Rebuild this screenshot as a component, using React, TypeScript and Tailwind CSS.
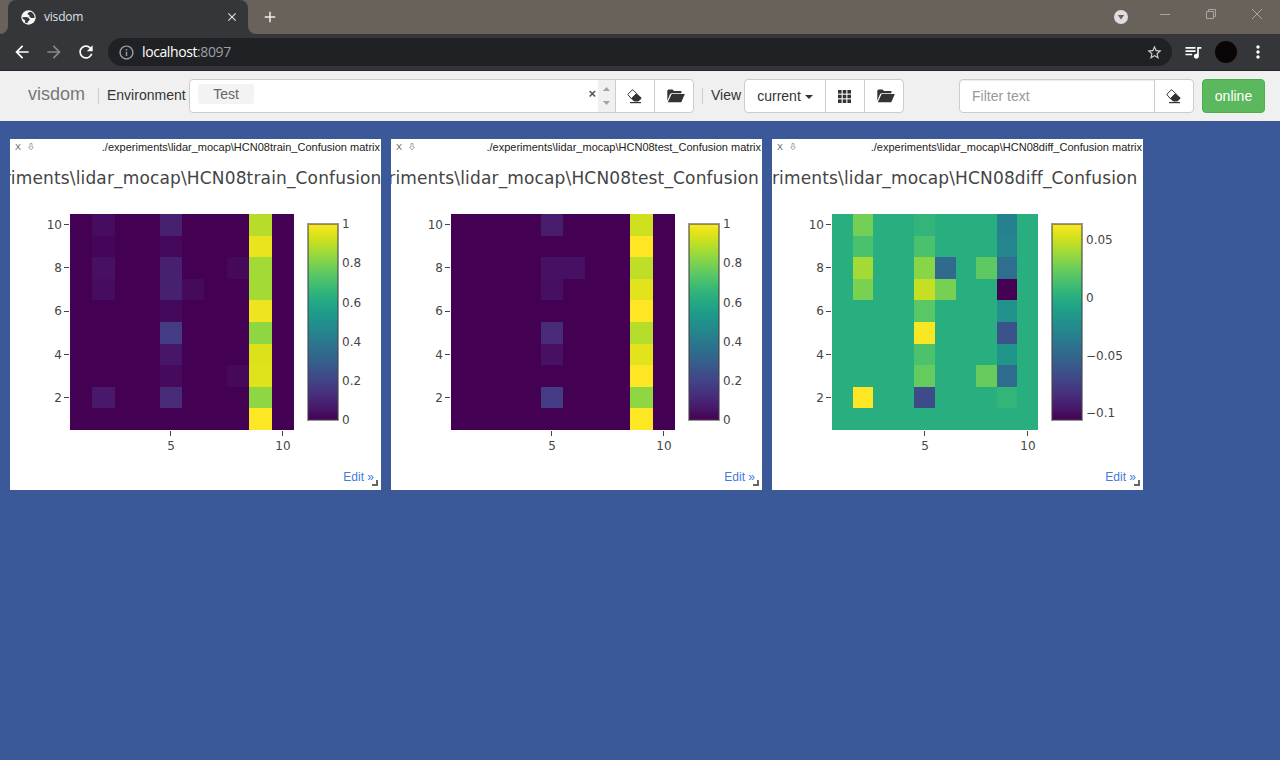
import React, { useId } from 'react';
import {
  MdArrowBack,
  MdArrowForward,
  MdClose,
  MdMoreVert,
  MdOutlineInfo,
  MdQueueMusic,
  MdRefresh,
  MdStarBorder,
  MdAdd,
} from 'react-icons/md';

const VIRIDIS: [number, number, number][] = [
  [68, 1, 84], [72, 24, 106], [71, 45, 123], [66, 64, 134], [59, 82, 139], [51, 99, 141],
  [44, 114, 142], [38, 130, 142], [33, 145, 140], [31, 160, 136], [40, 174, 128], [63, 188, 115],
  [94, 201, 98], [132, 212, 75], [173, 220, 48], [216, 226, 25], [253, 231, 37],
];

function viridis(t: number) {
  const p = Math.min(Math.max(t, 0), 1) * 16;
  const i = Math.min(Math.floor(p), 15);
  const c = VIRIDIS[i].map((v, k) => Math.round(v + (VIRIDIS[i + 1][k] - v) * (p - i)));
  return `rgb(${c[0]},${c[1]},${c[2]})`;
}

// A cell is [row, column, value], with the value scaled to 0..1
type Cell = [number, number, number];
type Tick = [number, string];

interface Pane {
  name: string;
  titleX: number;
  plotW: number;
  base: number;
  barX: number;
  xTicks: Tick[];
  barTicks: Tick[];
  cells: Cell[];
}

const UNIT_TICKS: Tick[] = [[85, '1'], [124, '0.8'], [164, '0.6'], [203, '0.4'], [242, '0.2'], [281, '0']];

const PANES: Pane[] = [
  {
    name: 'train', titleX: 371.5, plotW: 224, base: 0, barX: 298, xTicks: [[160, '5'], [272, '10']], barTicks: UNIT_TICKS,
    cells: [
      [10, 2, 0.03], [10, 5, 0.085], [10, 9, 0.89], [9, 2, 0.014], [9, 5, 0.018], [9, 9, 0.966],
      [8, 2, 0.042], [8, 5, 0.085], [8, 8, 0.018], [8, 9, 0.86], [7, 2, 0.03], [7, 5, 0.085],
      [7, 6, 0.024], [7, 9, 0.86], [6, 5, 0.022], [6, 9, 0.975], [5, 5, 0.172], [5, 9, 0.83],
      [4, 5, 0.058], [4, 9, 0.942], [3, 5, 0.024], [3, 8, 0.018], [3, 9, 0.95], [2, 2, 0.066],
      [2, 5, 0.115], [2, 9, 0.83], [1, 9, 1],
    ],
  },
  {
    name: 'test', titleX: 368, plotW: 224, base: 0, barX: 298, xTicks: [[160, '5'], [272, '10']], barTicks: UNIT_TICKS,
    cells: [
      [10, 5, 0.075], [10, 9, 0.925], [9, 9, 1], [8, 5, 0.044], [8, 6, 0.044], [8, 9, 0.9],
      [7, 5, 0.038], [7, 9, 0.955], [6, 9, 1], [5, 5, 0.115], [5, 9, 0.885], [4, 5, 0.04],
      [4, 9, 0.955], [3, 9, 1], [2, 5, 0.17], [2, 9, 0.83], [1, 9, 1],
    ],
  },
  {
    name: 'diff', titleX: 365.5, plotW: 206, base: 0.627, barX: 280, xTicks: [[152, '5'], [255, '10']],
    barTicks: [[101, '0.05'], [159, '0'], [217, '−0.05'], [274, '−0.1']],
    cells: [
      [10, 2, 0.785], [10, 5, 0.655], [10, 9, 0.435], [9, 2, 0.71], [9, 5, 0.71], [9, 9, 0.45],
      [8, 2, 0.86], [8, 5, 0.82], [8, 6, 0.34], [8, 8, 0.75], [8, 9, 0.36], [7, 2, 0.795],
      [7, 5, 0.91], [7, 6, 0.79], [7, 9, 0], [6, 5, 0.74], [6, 9, 0.505], [5, 5, 0.995],
      [5, 9, 0.25], [4, 5, 0.715], [4, 9, 0.52], [3, 5, 0.76], [3, 8, 0.765], [3, 9, 0.35],
      [2, 2, 1], [2, 5, 0.23], [2, 9, 0.655],
    ],
  },
];

const PLOT_X = 60;
const PLOT_Y = 75;
const PLOT_H = 216;

function Heatmap({ pane }: { pane: Pane }) {
  const id = useId();
  const colX = (c: number) => PLOT_X + Math.round((pane.plotW * c) / 10);
  const rowY = (r: number) => PLOT_Y + Math.round((PLOT_H * r) / 10);
  return (
    <svg
      className="absolute inset-0 font-['DejaVu_Sans',sans-serif] text-[12px]"
      width="371"
      height="351"
      fill="#444"
    >
      <defs>
        <linearGradient id={id} x1="0" y1="1" x2="0" y2="0">
          {VIRIDIS.map((_, i) => (
            <stop key={i} offset={i / 16} stopColor={viridis(i / 16)} />
          ))}
        </linearGradient>
      </defs>
      <text x={pane.titleX} y="45" textAnchor="end" fontSize="17" letterSpacing="0.15">
        {`./experiments\\lidar_mocap\\HCN08${pane.name}_Confusion`}
      </text>
      <g shapeRendering="crispEdges">
        <rect x={PLOT_X} y={PLOT_Y} width={pane.plotW} height={PLOT_H} fill={viridis(pane.base)} />
        {pane.cells.map(([r, c, v]) => (
          <rect
            key={`${r}-${c}`}
            x={colX(c - 1)}
            y={rowY(10 - r)}
            width={colX(c) - colX(c - 1)}
            height={rowY(11 - r) - rowY(10 - r)}
            fill={viridis(v)}
          />
        ))}
        {[85, 128, 172, 215, 258].map((y) => (
          <rect key={y} x="54" y={y - 1 + 1} width="5" height="1" />
        ))}
        {pane.xTicks.map(([x]) => (
          <rect key={x} x={x} y="292" width="1" height="5" />
        ))}
      </g>
      {[10, 8, 6, 4, 2].map((n, i) => (
        <text key={n} x="52" y={[90, 133, 176, 220, 263][i]} textAnchor="end">{n}</text>
      ))}
      {pane.xTicks.map(([x, label]) => (
        <text key={label} x={x + 1} y="311" textAnchor="middle">{label}</text>
      ))}
      <rect x={pane.barX} y="85" width="30" height="196" fill={`url(#${id})`} stroke="#444" strokeOpacity="0.55" strokeWidth="2" />
      {pane.barTicks.map(([y, label]) => (
        <text key={label} x={pane.barX + 34} y={y + 4}>{label}</text>
      ))}
    </svg>
  );
}

function PlotPane({ pane }: { pane: Pane }) {
  return (
    <section className="relative flex h-[351px] w-[371px] flex-col justify-between overflow-hidden bg-white">
      <Heatmap pane={pane} />
      <header className="relative flex h-[16px] items-center pr-px text-[11px] leading-[16px] text-[#222]">
        <span className="ml-[5px] w-[12px] text-[9px] leading-[14px] text-[#666]">X</span>
        <svg className="mb-[1px] ml-px" width="6" height="8" viewBox="0 0 6 8" fill="none" stroke="#999" strokeWidth="0.8">
          <path d="M2 .5h2v3.700h1.400L3 7 .6 4.200H2z" />
        </svg>
        <span className="ml-auto whitespace-nowrap">{`./experiments\\lidar_mocap\\HCN08${pane.name}_Confusion matrix`}</span>
      </header>
      <footer className="relative flex h-[26px] justify-end pr-[7px] text-[12px] leading-[26px] text-[#447bdc]">
        <span>Edit »</span>
        <svg className="absolute bottom-[4px] right-[3px]" width="6" height="6">
          <path d="M4 0h2v6H0V4h4z" fill="#666" />
        </svg>
      </footer>
    </section>
  );
}

function Eraser() {
  return (
    <svg className="-ml-[1px]" width="15" height="15" viewBox="0 0 15 15">
      <path d="M5 1.100 1.200 5q-.4.5 0 1l3.300 3.800L9.700 4.600 6.200 1.100q-.6-.5-1.200 0z" fill="none" stroke="#333" strokeWidth="1" />
      <path d="M9.500 4.200l4.700 4.400q.6.600 0 1.200L11.900 12q-.4.400-1 .4H7.600q-.5 0-.9-.4L4 9.500z" fill="#333" />
      <path d="M3 13h11v1.200H3z" fill="#333" />
    </svg>
  );
}

function FolderOpen() {
  return (
    <svg className="ml-[3px]" width="18" height="14" viewBox="0 0 18 14" fill="#333">
      <path d="M.3 11.800V1.500L1.400.5h4.300l1.200 1.500h7.500V4.200H4.200L3.100 5z" />
      <path d="M4.600 5h13.200l-3.500 8.300H.8z" />
    </svg>
  );
}

function Grid() {
  return (
    <svg className="-ml-px" width="13" height="13" viewBox="0 0 13 13" fill="#333">
      {[0, 4.7, 9.4].map((y) => [0, 4.7, 9.4].map((x) => <rect key={`${x}-${y}`} x={x} y={y} width="3.600" height="3.600" />))}
    </svg>
  );
}

function Globe() {
  return (
    <svg width="15" height="15" viewBox="0 0 15 15">
      <circle cx="7.500" cy="7.500" r="7.200" fill="#f5f5f5" />
      <path
        d="M8.200 1.900 6.800 3.300v1.500l1.700.3-.3 1.200 1.900 1.600 3.200.2.200-2.200-1.300-2.400-2-1.600zM1.600 7.300l3-.2 2.600.3 1.500 1.500-.4 1.600-1.400.9-.4 1.800-2.600-.6.300-2.200-1.400-1.200-1.200-.3z"
        fill="#35363a"
      />
    </svg>
  );
}

function IconButton({ children, className = '' }: { children: React.ReactNode; className?: string }) {
  return (
    <button className={`flex h-[34px] items-center justify-center border border-[#ccc] bg-white ${className}`}>{children}</button>
  );
}

function TabStrip() {
  return (
    <div className="flex h-[34px] bg-[#69625b]">
      <svg className="self-end" width="8" height="8"><path d="M8 0v8H0a8 8 0 0 0 8-8z" fill="#35363a" /></svg>
      <div className="flex w-[240px] items-center rounded-t-[8px] bg-[#35363a] pl-[13px] pr-[9px]">
        <Globe />
        <span className="ml-[8px] font-['Open_Sans',sans-serif] text-[12px] tracking-[-0.2px] text-[#dfe1e5]">visdom</span>
        <MdClose className="ml-auto text-[14px] text-[#dfe1e5]" />
      </div>
      <svg className="self-end" width="8" height="8"><path d="M0 0v8h8a8 8 0 0 1-8-8z" fill="#35363a" /></svg>
      <MdAdd className="ml-[5px] mt-[8px] text-[18px] text-[#eee]" />
      <div className="ml-auto flex pr-[18px]">
        <svg className="mt-[10px]" width="14" height="14"><circle cx="7" cy="7" r="7" fill="#dedede" /><path d="M3.800 5h6.400L7 9.600z" fill="#69625b" /></svg>
        <svg className="ml-[32px] mt-[14px]" width="10" height="1"><path d="M0 0h10v1H0z" fill="#a9a5a1" /></svg>
        <svg className="ml-[36px] mt-[9px]" width="10" height="10" fill="none" stroke="#a9a5a1"><path d="M.5 2.500h7v7h-7zM2.500 2V.500h7v7H8" /></svg>
        <svg className="ml-[36px] mt-[9px]" width="10" height="10" stroke="#a9a5a1"><path d="M0 0l10 10M10 0L0 10" /></svg>
      </div>
    </div>
  );
}

function AddressBar() {
  return (
    <div className="flex h-[37px] items-center border-b border-[#28232a] bg-[#35363a] pl-[12px] text-white">
      <MdArrowBack className="text-[20px]" />
      <MdArrowForward className="ml-[12px] text-[20px] text-[#86878a]" />
      <MdRefresh className="ml-[12px] text-[20px]" />
      <div className="ml-[12px] flex h-[28px] w-[1064px] items-center rounded-full bg-[#202124] pl-[10px] pr-[9px]">
        <MdOutlineInfo className="text-[17px] text-[#9aa0a6]" />
        <span className="ml-[7px] pb-[2px] font-['Open_Sans',sans-serif] text-[14px] tracking-[-0.4px]">
          localhost<span className="text-[#9aa0a6]">:8097</span>
        </span>
        <MdStarBorder className="ml-auto text-[17px] text-[#d0d0d0]" />
      </div>
      <MdQueueMusic className="ml-[11px] text-[20px]" />
      <span className="ml-[12px] size-[22px] rounded-full bg-[#0b0606]" />
      <MdMoreVert className="ml-[11px] text-[20px]" />
    </div>
  );
}

function Navbar() {
  return (
    <nav className="flex h-[50px] items-center bg-[#f0f0f0] text-[14px] text-[#333]">
      <span className="ml-[28px] w-[70px] pb-[4px] text-[18px] text-[#777]">visdom</span>
      <span className="mb-[1px] h-[16px] w-px bg-[#ccc]" />
      <span className="ml-[8px] w-[82px] pb-[2px]">Environment</span>
      <div className="flex h-[34px] w-[427px] overflow-hidden rounded-l-[4px] border border-[#ccc] bg-white">
        <span className="ml-[8px] mt-[4px] h-[20px] w-[56px] rounded-[3px] bg-[#f3f3f3] text-center leading-[21px] text-[#666]">Test</span>
        <span className="ml-auto mr-[2px] mt-[6px] text-[13px] font-bold leading-[16px] text-[#555]">×</span>
        <div className="flex w-[17px] flex-col items-center justify-between bg-[#f0f0f0] py-[7px]">
          <svg width="7" height="4" fill="#a3a3a3"><path d="M0 4h7L3.500 0z" /></svg>
          <svg width="7" height="4" fill="#a3a3a3"><path d="M0 0h7L3.500 4z" /></svg>
        </div>
      </div>
      <IconButton className="-ml-px w-[40px]"><Eraser /></IconButton>
      <IconButton className="-ml-px w-[40px] rounded-r-[4px]"><FolderOpen /></IconButton>
      <span className="mb-[1px] ml-[8px] h-[16px] w-px bg-[#ccc]" />
      <span className="ml-[8px] w-[33px] pb-[2px]">View</span>
      <IconButton className="w-[82px] rounded-l-[4px]">
        current
        <svg className="ml-[4px] mt-[2px]" width="8" height="4" fill="#333"><path d="M0 0h8L4 4z" /></svg>
      </IconButton>
      <IconButton className="-ml-px w-[40px]"><Grid /></IconButton>
      <IconButton className="-ml-px w-[40px] rounded-r-[4px]"><FolderOpen /></IconButton>
      <div className="ml-auto flex h-[34px] w-[196px] items-center rounded-l-[4px] border border-[#ccc] bg-white pl-[12px] text-[#999] shadow-[inset_0_1px_1px_rgba(0,0,0,0.075)]">
        Filter text
      </div>
      <IconButton className="-ml-px w-[40px] rounded-r-[4px]"><Eraser /></IconButton>
      <button className="ml-[8px] mr-[15px] h-[34px] w-[63px] rounded-[4px] border border-[#4cae4c] bg-[#5cb85c] text-white">online</button>
    </nav>
  );
}

export default function App() {
  return (
    <div className="flex h-[760px] w-[1280px] flex-col overflow-hidden bg-[#3b5998] font-['Liberation_Sans',Arial,sans-serif]">
      <TabStrip />
      <AddressBar />
      <Navbar />
      <main className="flex gap-[10px] pl-[10px] pt-[18px]">
        {PANES.map((p) => (
          <PlotPane key={p.name} pane={p} />
        ))}
      </main>
    </div>
  );
}
